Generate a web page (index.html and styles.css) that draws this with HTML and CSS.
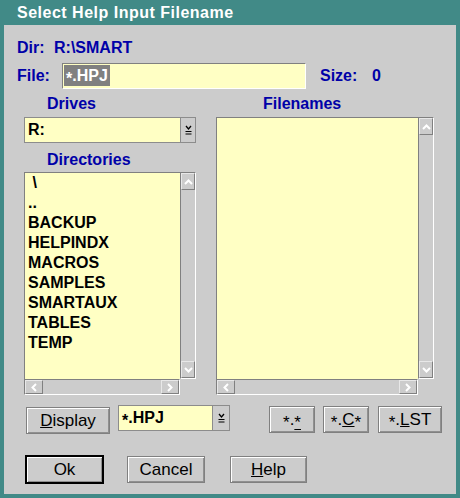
FILE: index.html
```
<html>
    <head>
        <link rel="stylesheet" href="styles.css">
    </head>
    <body>
        <div class="dialog">
            <div class="title">Select Help Input Filename</div>
            <div class="client">

                <div class="dir-row">
                    <span class="lbl dir-lbl">Dir:</span><span class="lbl">R:\SMART</span>
                </div>

                <div class="file-row">
                    <span class="lbl file-lbl">File:</span>
                    <div class="entry"><span class="sel"><span class="ast">*</span>.HPJ</span></div>
                    <span class="lbl size-lbl">Size:</span><span class="lbl">0</span>
                </div>

                <div class="panes">
                    <div class="col">
                        <div class="lbl head drives-head">Drives</div>
                        <div class="combo drive-combo">
                            <span class="combo-text">R:</span>
                            <span class="drop"><svg width="7" height="10" viewBox="0 0 7 10"><path d="M1 1 L3.5 4 L6 1" fill="none" stroke="#000" stroke-width="1.3"/><path d="M0.5 6.5 H6.5 M0.5 9 H6.5" stroke="#000" stroke-width="1"/></svg></span>
                        </div>
                        <div class="lbl head dirs-head">Directories</div>
                        <div class="listbox dirs">
                            <div class="list-items">
                                <div class="item">&nbsp;\</div>
                                <div class="item">..</div>
                                <div class="item">BACKUP</div>
                                <div class="item">HELPINDX</div>
                                <div class="item">MACROS</div>
                                <div class="item">SAMPLES</div>
                                <div class="item">SMARTAUX</div>
                                <div class="item">TABLES</div>
                                <div class="item">TEMP</div>
                            </div>
                            <div class="vscroll">
                                <span class="sbtn vbtn"><svg width="9" height="6" viewBox="0 0 9 6"><path d="M1 5 L4.5 1.5 L8 5" fill="none" stroke="#fff" stroke-width="2"/></svg></span>
                                <span class="sbtn vbtn"><svg width="9" height="6" viewBox="0 0 9 6"><path d="M1 1 L4.5 4.5 L8 1" fill="none" stroke="#fff" stroke-width="2"/></svg></span>
                            </div>
                            <div class="hscroll">
                                <span class="sbtn hbtn"><svg width="6" height="9" viewBox="0 0 6 9"><path d="M5 1 L1.5 4.5 L5 8" fill="none" stroke="#fff" stroke-width="2"/></svg></span>
                                <span class="sbtn hbtn"><svg width="6" height="9" viewBox="0 0 6 9"><path d="M1 1 L4.5 4.5 L1 8" fill="none" stroke="#fff" stroke-width="2"/></svg></span>
                            </div>
                        </div>
                    </div>
                    <div class="col">
                        <div class="lbl head files-head">Filenames</div>
                        <div class="listbox files">
                            <div class="list-items"></div>
                            <div class="vscroll">
                                <span class="sbtn vbtn"><svg width="9" height="6" viewBox="0 0 9 6"><path d="M1 5 L4.5 1.5 L8 5" fill="none" stroke="#fff" stroke-width="2"/></svg></span>
                                <span class="sbtn vbtn"><svg width="9" height="6" viewBox="0 0 9 6"><path d="M1 1 L4.5 4.5 L8 1" fill="none" stroke="#fff" stroke-width="2"/></svg></span>
                            </div>
                            <div class="hscroll">
                                <span class="sbtn hbtn"><svg width="6" height="9" viewBox="0 0 6 9"><path d="M5 1 L1.5 4.5 L5 8" fill="none" stroke="#fff" stroke-width="2"/></svg></span>
                                <span class="sbtn hbtn"><svg width="6" height="9" viewBox="0 0 6 9"><path d="M1 1 L4.5 4.5 L1 8" fill="none" stroke="#fff" stroke-width="2"/></svg></span>
                            </div>
                        </div>
                    </div>
                </div>

                <div class="tools-row">
                    <div class="btn display-btn"><u>D</u>isplay</div>
                    <div class="combo filter-combo">
                        <span class="combo-text"><span class="ast">*</span>.HPJ</span>
                        <span class="drop"><svg width="7" height="10" viewBox="0 0 7 10"><path d="M1 1 L3.5 4 L6 1" fill="none" stroke="#000" stroke-width="1.3"/><path d="M0.5 6.5 H6.5 M0.5 9 H6.5" stroke="#000" stroke-width="1"/></svg></span>
                    </div>
                    <div class="btn mask-btn all-btn"><span class="ast">*</span>.<u class="ast">*</u></div>
                    <div class="btn mask-btn c-btn"><span class="ast">*</span>.<u>C</u><span class="ast">*</span></div>
                    <div class="btn mask-btn lst-btn"><span class="ast">*</span>.<u>L</u>ST</div>
                </div>

                <div class="action-row">
                    <div class="btn ok-btn">Ok</div>
                    <div class="btn cancel-btn">Cancel</div>
                    <div class="btn help-btn"><u>H</u>elp</div>
                </div>

            </div>
        </div>
    </body>
</html>
```

FILE: styles.css
```
body {
    margin: 0;
    font-family: "Liberation Sans", Arial, sans-serif;
    font-weight: bold;
    font-size: 16px;
}

.dialog {
    width: 460px;
    height: 498px;
    box-sizing: border-box;
    background: #418a87;
    padding: 0 4px 4px 4px;
    display: flex;
    flex-direction: column;
}

.title {
    height: 25px;
    line-height: 25px;
    color: #fff;
    padding-left: 13px;
    letter-spacing: 0.5px;
}

.client {
    flex: 1;
    background: #cccccc;
}

.lbl {
    color: #0000a8;
}

/* asterisks sit mid-height in the original font */
.ast {
    display: inline-block;
    transform: translateY(3px);
}

.dir-row {
    margin-top: 13px;
    height: 20px;
    line-height: 20px;
    padding-left: 13px;
    display: flex;
}
.dir-lbl {
    width: 37px;
}

.file-row {
    margin-top: 5px;
    height: 26px;
    padding-left: 13px;
    display: flex;
    align-items: center;
}
.file-lbl {
    width: 45px;
}
.entry {
    width: 244px;
    height: 26px;
    box-sizing: border-box;
    border: 1px solid;
    border-color: #808080 #fff #fff #808080;
    background: #ffffc4;
    padding: 1px;
}
.sel {
    display: inline-block;
    height: 21px;
    line-height: 21px;
    padding: 0 2px;
    background: #808080;
    color: #fff;
}
.size-lbl {
    margin-left: 14px;
    width: 52px;
}

.panes {
    margin-top: 5px;
    padding-left: 20px;
    display: grid;
    grid-template-columns: 172px 218px;
    column-gap: 20px;
}
.head {
    height: 23px;
    line-height: 20px;
}
.drives-head {
    padding-left: 23px;
}
.files-head {
    padding-left: 47px;
}
.dirs-head {
    margin-top: 7px;
    height: 22px;
    padding-left: 23px;
}

.combo {
    height: 26px;
    box-sizing: border-box;
    border: 1px solid #8c8c8c;
    background: #ffffc4;
    display: flex;
}
.combo-text {
    flex: 1;
    line-height: 24px;
    padding-left: 3px;
}
.drop {
    width: 14px;
    border-left: 1px solid #8c8c8c;
    background: #cccccc;
    display: flex;
    align-items: center;
    justify-content: center;
}

.listbox {
    display: grid;
    grid-template-columns: 1fr 16px;
    grid-template-rows: 1fr 16px;
}
.dirs {
    height: 223px;
}
.files {
    height: 278px;
}
.list-items {
    background: #ffffc4;
    border-top: 1px solid #808080;
    border-left: 1px solid #808080;
    padding-left: 3px;
}
.item {
    height: 20px;
    line-height: 20px;
}
.vscroll {
    box-sizing: border-box;
    border: 1px solid;
    border-color: #808080 #fff #fff #808080;
    display: flex;
    flex-direction: column;
    justify-content: space-between;
}
.hscroll {
    box-sizing: border-box;
    border: 1px solid;
    border-color: #808080 #fff #fff #808080;
    display: flex;
    justify-content: space-between;
}
.sbtn {
    box-sizing: border-box;
    border: 1px solid;
    border-color: #e8e8e8 #808080 #808080 #e8e8e8;
    background: #cccccc;
    display: flex;
    align-items: center;
    justify-content: center;
}
.vbtn {
    height: 17px;
}
.hbtn {
    width: 18px;
}

.btn {
    box-sizing: border-box;
    height: 27px;
    border: 1px solid #808080;
    box-shadow: inset 1px 1px #fff, inset -1px -1px #909090;
    background: #cccccc;
    color: #000;
    font-weight: normal;
    font-size: 17px;
    display: flex;
    align-items: center;
    justify-content: center;
}

.tools-row {
    margin-top: 10px;
    height: 29px;
    display: flex;
    align-items: flex-start;
}
.display-btn {
    margin-left: 22px;
    margin-top: 2px;
    width: 84px;
}
.filter-combo {
    margin-left: 8px;
    width: 112px;
}
.filter-combo .drop {
    width: 16px;
}
.mask-btn {
    margin-top: 1px;
    width: 46px;
}
.all-btn {
    margin-left: 39px;
}
.c-btn {
    margin-left: 8px;
}
.lst-btn {
    margin-left: 9px;
    width: 64px;
}

.action-row {
    margin-top: 21px;
    display: flex;
    align-items: flex-start;
}
.ok-btn {
    margin-left: 21px;
    width: 79px;
    height: 29px;
    border: 2px solid #000;
}
.cancel-btn {
    margin-left: 23px;
    margin-top: 1px;
    width: 78px;
}
.help-btn {
    margin-left: 25px;
    margin-top: 1px;
    width: 77px;
}
```
